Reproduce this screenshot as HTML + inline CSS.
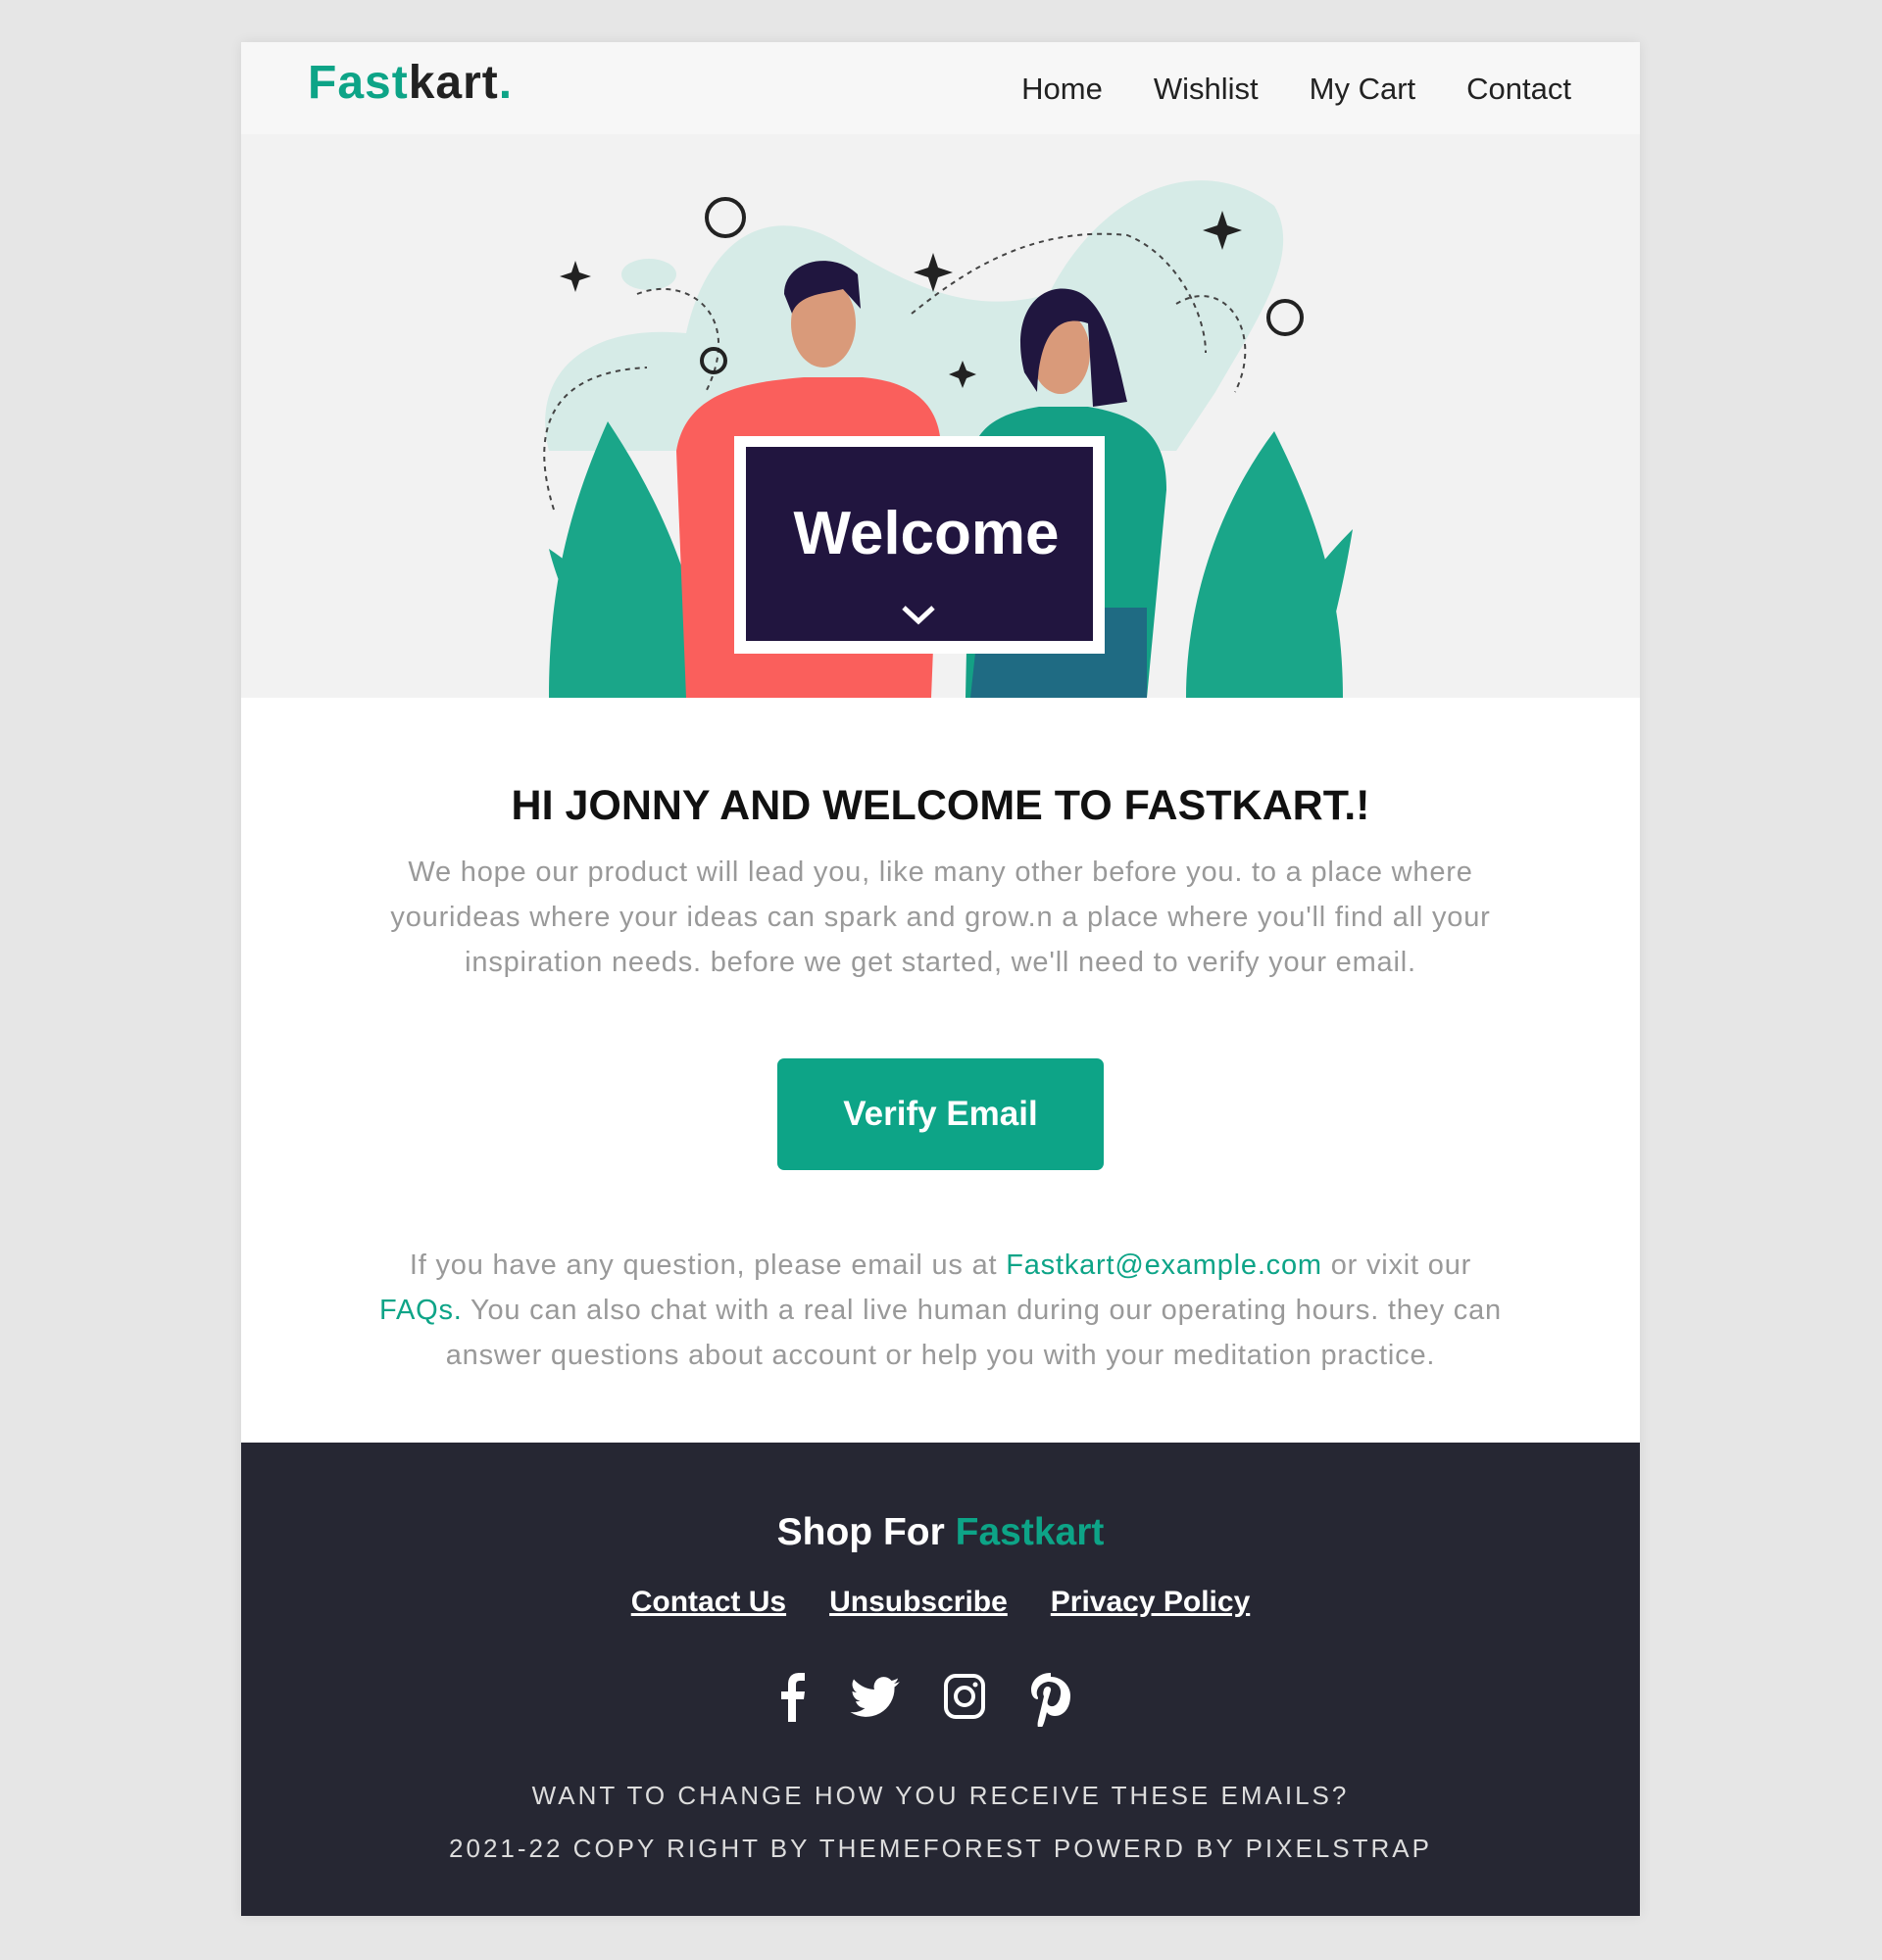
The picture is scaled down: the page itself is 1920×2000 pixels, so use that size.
<!DOCTYPE html>
<html><head><meta charset="utf-8">
<style>
*{margin:0;padding:0;box-sizing:border-box}
body{width:1920px;height:2000px;background:#e6e6e6;font-family:"Liberation Sans",sans-serif;position:relative;overflow:hidden}
.wrap{position:absolute;left:246px;top:43px;width:1427px;height:1912px;background:#fff;box-shadow:0 0 12px rgba(0,0,0,.08)}
.hdr{position:absolute;left:0;top:0;width:1427px;height:94px;background:#f7f7f7}
.logo{position:absolute;left:68px;top:14px;font-size:48px;font-weight:bold;color:#222;letter-spacing:1px}
.logo span{color:#0da487}
.nav{position:absolute;right:70px;top:30px;font-size:31px;color:#222}
.nav a{margin-left:52px}
.hero{position:absolute;left:0;top:94px;width:1427px;height:575px;background:#f2f2f2}
h1{position:absolute;left:0;width:1427px;top:755px;text-align:center;font-size:43px;font-weight:bold;color:#111}
.p{position:absolute;left:0;width:1427px;text-align:center;font-size:29px;letter-spacing:0.8px;line-height:46px;color:#999}
.p a{color:#0da487}
.btn{position:absolute;left:547px;top:1037px;width:333px;height:114px;background:#0da487;border-radius:7px;color:#fff;font-size:35px;font-weight:bold;text-align:center;line-height:114px}
.ft{position:absolute;left:0;top:1429px;width:1427px;height:483px;background:#262733;color:#fff;text-align:center}
.ft h2{position:absolute;top:70px;width:100%;font-size:39px}
.ft h2 span{color:#0da487}
.links{position:absolute;top:146px;width:100%;font-size:30px;font-weight:bold}
.links a{text-decoration:underline;margin:0 22px}
.icons{position:absolute;top:230px;width:100%;height:60px}
.ft .t{position:absolute;width:100%;font-size:26px;letter-spacing:3px;color:#ddd}
</style></head><body>
<div class="wrap">
<div class="hdr"><div class="logo"><span>Fast</span>kart<span>.</span></div>
<div class="nav"><a>Home</a><a>Wishlist</a><a>My Cart</a><a>Contact</a></div></div>
<div class="hero">
<svg width="1427" height="575" viewBox="246 137 1427 575" style="position:absolute;left:0;top:0">
<path d="M560 460 C540 380 600 330 700 340 C720 250 780 200 860 250 C940 300 1000 320 1070 300 C1120 200 1220 150 1300 210 C1330 260 1280 330 1240 400 L1200 460 Z" fill="#d6ebe7"/>
<ellipse cx="662" cy="280" rx="28" ry="16" fill="#d6ebe7"/>
<path d="M565 520 C540 440 560 380 660 375 M650 300 C700 280 760 320 720 400 M930 320 C980 280 1050 230 1150 240 C1200 260 1230 320 1230 360 M1200 310 C1250 280 1290 340 1260 400" fill="none" stroke="#444" stroke-width="2" stroke-dasharray="5 5"/>
<circle cx="740" cy="222" r="19" fill="none" stroke="#222" stroke-width="4"/>
<circle cx="728" cy="368" r="12" fill="none" stroke="#222" stroke-width="4"/>
<circle cx="1311" cy="324" r="17" fill="none" stroke="#222" stroke-width="4"/>
<path d="M587 266 l4 12 12 4 -12 4 -4 12 -4 -12 -12 -4 12 -4z M952 258 l5 15 15 5 -15 5 -5 15 -5 -15 -15 -5 15 -5z M1247 215 l5 15 15 5 -15 5 -5 15 -5 -15 -15 -5 15 -5z M982 368 l4 10 10 4 -10 4 -4 10 -4 -10 -10 -4 10 -4z" fill="#222"/>
<path d="M560 712 C560 600 580 520 620 430 C680 520 720 620 720 712Z M620 712 C590 640 570 600 560 560 C620 600 660 660 680 712Z" fill="#1aa689"/>
<path d="M1370 712 C1370 600 1340 520 1300 440 C1240 520 1210 620 1210 712Z M1340 712 C1360 640 1370 600 1380 540 C1320 600 1290 660 1280 712Z" fill="#1aa689"/>
<path d="M700 712 L690 460 C700 400 760 390 820 385 L880 385 C940 390 960 420 960 460 L950 712Z" fill="#fa5f5c"/>
<path d="M985 712 L990 470 C995 430 1030 420 1060 415 L1110 415 C1170 425 1190 450 1190 500 L1170 712Z" fill="#14a085"/>
<path d="M990 712 L1000 620 L1170 620 L1170 712Z" fill="#1f6b83"/>
<ellipse cx="840" cy="330" rx="33" ry="45" fill="#d99a7a"/>
<path d="M800 300 C800 265 850 255 875 280 L878 315 L860 295 C840 300 815 300 808 320Z" fill="#20163f"/>
<ellipse cx="1082" cy="360" rx="30" ry="42" fill="#d99a7a"/>
<path d="M1045 380 C1030 320 1060 290 1090 295 C1130 300 1140 370 1150 410 L1115 415 L1110 330 C1080 320 1060 340 1058 400Z" fill="#20163f"/>
<rect x="749" y="445" width="378" height="222" fill="#fff"/>
<rect x="761" y="456" width="354" height="198" fill="#21153f"/>
<text x="945" y="565" text-anchor="middle" font-family="Liberation Sans" font-weight="bold" font-size="62" fill="#fff">Welcome</text>
<path d="M922 620 l15 14 15 -14" fill="none" stroke="#fff" stroke-width="5"/>
</svg>
</div>
<h1>HI JONNY AND WELCOME TO FASTKART.!</h1>
<div class="p" style="top:824px">We hope our product will lead you, like many other before you. to a place where<br>yourideas where your ideas can spark and grow.n a place where you'll find all your<br>inspiration needs. before we get started, we'll need to verify your email.</div>
<div class="btn">Verify Email</div>
<div class="p" style="top:1225px">If you have any question, please email us at <a>Fastkart@example.com</a> or vixit our<br><a>FAQs.</a> You can also chat with a real live human during our operating hours. they can<br>answer questions about account or help you with your meditation practice.</div>
<div class="ft">
<h2>Shop For <span>Fastkart</span></h2>
<div class="links"><a>Contact Us</a><a>Unsubscribe</a><a>Privacy Policy</a></div>
<div class="icons"><svg width="1427" height="60" viewBox="0 0 1427 60" fill="#fff">
<path d="M558 55 V32 H551 V24 H558 V17 C558 9 562 5 570 5 H575 V13 H571 C567 13 566 14 566 18 V24 H575 L574 32 H566 V55Z"/>
<g transform="translate(6,0)"><path d="M666 14 c-2 1 -4 1.5 -6 2 c2 -1.5 3.5 -3 4 -5.5 c-2 1.2 -4.2 2 -6.5 2.5 a10 10 0 0 0 -17.5 9 c-8.5 -.5 -16 -4.5 -21 -10.5 a10 10 0 0 0 3 13.5 c-1.6 0 -3.2 -.5 -4.5 -1.2 c0 5 3.5 9 8 10 c-1.5 .4 -3 .5 -4.5 .2 c1.3 4 5 7 9.5 7 a20 20 0 0 1 -15 4 a29 29 0 0 0 45 -25.5 c2 -1.5 3.5 -3 5 -5z"/></g>
<g transform="translate(23,0)"><rect x="696" y="8" width="38" height="42" rx="10" fill="none" stroke="#fff" stroke-width="4"/><circle cx="715" cy="29" r="9" fill="none" stroke="#fff" stroke-width="4"/><circle cx="726" cy="17" r="2.5"/></g>
<g transform="translate(48,0)"><path d="M778 5 c-13 0 -20 9 -20 17 c0 5 2 9 6 10 c1 0 1 -1 1 -2 c-3 -4 -1 -14 10 -16 c9 0 14 5 13 13 c-1 9 -6 13 -10 12 c-3 -1 -4 -3 -3 -6 l3 -10 c1 -4 -5 -6 -7 -1 c-1 3 -1 5 0 7 l-6 25 c-1 4 0 8 1 10 l1 0 c2 -3 4 -7 5 -11 l2 -8 c1 2 4 4 8 4 c10 0 16 -9 16 -21 c0 -10 -9 -19 -20 -19z"/></g>
</svg></div>
<div class="t" style="top:345px">WANT TO CHANGE HOW YOU RECEIVE THESE EMAILS?</div>
<div class="t" style="top:399px">2021-22 COPY RIGHT BY THEMEFOREST POWERD BY PIXELSTRAP</div>
</div>
</div>
</body></html>
